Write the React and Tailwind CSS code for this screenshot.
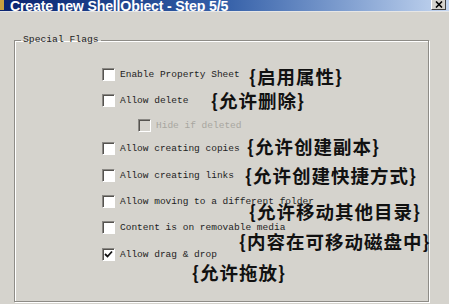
import React from "react";

const rows = [
  { label: "Enable Property Sheet", mt: "mt-[34px]" },
  { label: "Allow delete", mt: "mt-[13px]" },
  { label: "Hide if deleted", mt: "mt-[12px]", indent: true, disabled: true },
  { label: "Allow creating copies", mt: "mt-[10px]" },
  { label: "Allow creating links", mt: "mt-[14px]" },
  { label: "Allow moving to a different folder", mt: "mt-[13px]" },
  { label: "Content is on removable media", mt: "mt-[13px]" },
  { label: "Allow drag & drop", mt: "mt-[14px]", checked: true },
];

const notes = [
  { text: "{启用属性}", cls: "left-[249px] top-[67px]" },
  { text: "{允许删除}", cls: "left-[211px] top-[91px]" },
  { text: "{允许创建副本}", cls: "left-[247px] top-[137px]" },
  { text: "{允许创建快捷方式}", cls: "left-[245px] top-[166px]" },
  { text: "{允许移动其他目录}", cls: "left-[249px] top-[202px]" },
  { text: "{内容在可移动磁盘中}", cls: "left-[239px] top-[232px]" },
  { text: "{允许拖放}", cls: "left-[192px] top-[263px]" },
];

function CheckBox({ checked, disabled }) {
  return (
    <div
      className={`w-[13px] h-[13px] shrink-0 border border-t-[#8a8884] border-l-[#8a8884] border-b-white border-r-white shadow-[inset_1px_1px_0_#55534f] flex items-center justify-center ${
        disabled ? "bg-[#d5d3cd]" : "bg-white"
      }`}
    >
      {checked && (
        <svg width="9" height="9" viewBox="0 0 9 9">
          <path d="M1 4 L3.5 6.5 L8 1.5" stroke="#111" strokeWidth="1.8" fill="none" />
        </svg>
      )}
    </div>
  );
}

export default function App() {
  return (
    <div className="relative w-[449px] h-[304px] overflow-hidden bg-[#d5d3cd] font-['Liberation_Mono',monospace]">
      <div className="h-[12px] flex items-end overflow-hidden bg-gradient-to-r from-[#0b2470] via-[#3560a8] to-[#c4d6f0] border-b border-[#e6e6e6]">
        <div className="w-[4px] h-[10px] bg-[#c8a040] mb-[1px]" />
        <span className="ml-[6px] -mb-[3px] text-white font-bold text-[14.2px] leading-[16px] tracking-[-0.2px] font-['Liberation_Sans',sans-serif]">
          Create new ShellObject - Step 5/5
        </span>
        <div className="flex-1" />
        <div className="mr-[3px] mb-[1px] w-[15px] h-[11px] bg-[#d5d3cd] border border-t-white border-l-white border-b-[#404040] border-r-[#404040] flex items-center justify-center">
          <svg width="8" height="7" viewBox="0 0 8 7">
            <path d="M1 0.5 L7 6.5 M7 0.5 L1 6.5" stroke="#000" strokeWidth="1.6" />
          </svg>
        </div>
      </div>

      <fieldset className="ml-[14px] mt-[22px] w-[415px] h-[268px] border border-[#8e8c87] shadow-[1px_1px_0_#fff,inset_1px_1px_0_#fff]">
        <legend className="ml-[6px] px-[2px] text-[9.7px] leading-[12px] text-[#222]">Special Flags</legend>
        <div className="pl-[87px] flex flex-col -mt-[12px]">
          {rows.map((r) => (
            <div key={r.label} className={`${r.mt} flex items-center h-[13px] ${r.indent ? "pl-[36px]" : ""}`}>
              <CheckBox checked={r.checked} disabled={r.disabled} />
              <span
                className={`ml-[5px] text-[9.5px] leading-[13px] whitespace-nowrap ${
                  r.disabled ? "text-[#a8a6a0]" : "text-[#1e1e1e]"
                }`}
              >
                {r.label}
              </span>
            </div>
          ))}
        </div>
      </fieldset>

      {notes.map((n) => (
        <div
          key={n.text}
          className={`absolute ${n.cls} text-[18.5px] leading-[19px] tracking-[1px] font-bold text-[#111] whitespace-nowrap font-['Noto_Sans_CJK_SC',sans-serif]`}
        >
          {n.text}
        </div>
      ))}
    </div>
  );
}
